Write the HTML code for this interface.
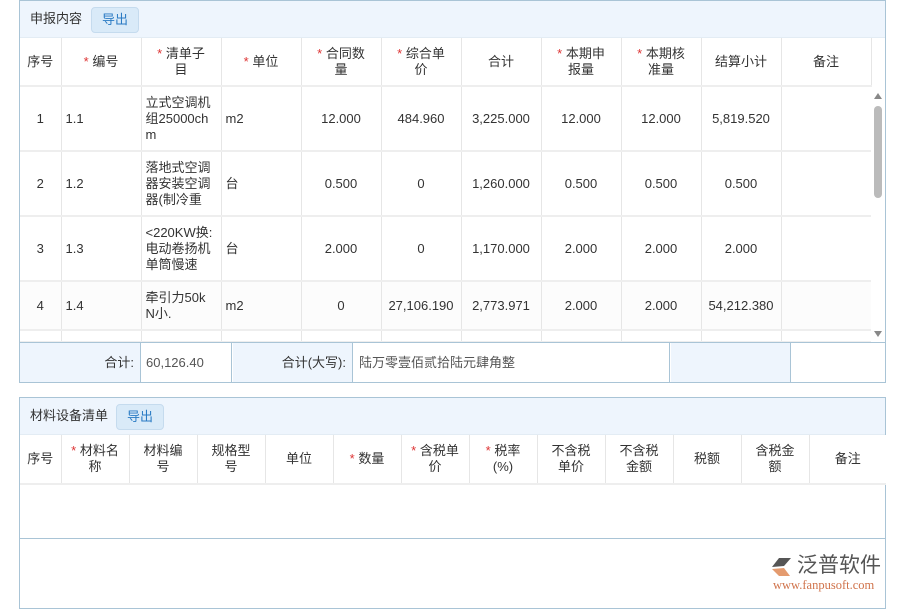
<!DOCTYPE html><html><head><meta charset="utf-8"><style>
body{margin:0;width:900px;height:600px;background:#fff;font-family:"Liberation Sans","Noto Sans CJK SC",sans-serif;font-size:13px;color:#333;position:relative;overflow:hidden}
.p{position:absolute;left:19px;width:865px;border:1px solid #a9c4d6;background:#fff}
.hd{height:36px;background:#eef5fd;border-bottom:1px solid #e3ecf4;position:relative}
.hd span{position:absolute;top:9px;left:10px;line-height:18px}
.btn{position:absolute;top:6px;height:24px;width:46px;background:#d9eaf8;border:1px solid #c5dbee;border-radius:4px;color:#2a7bc4;text-align:center;line-height:24px}
table{border-collapse:collapse;table-layout:fixed;position:absolute;left:0;background:#fff}
td{border-right:1px solid #e6e6e6;border-bottom:2px solid #eee;text-align:center;padding:0 4px;line-height:16px;overflow:hidden}
.l{text-align:left}
i{color:#d33;font-style:normal}
.f{position:absolute;top:342px;height:39px;line-height:39px;border-right:1px solid #a9c4d6}
</style></head><body>
<div class="p" style="top:0;height:381px">
<div class="hd"><span>申报内容</span><div class="btn" style="left:71px">导出</div></div>
<table style="top:37px;width:851px">
<colgroup><col style="width:41px"><col style="width:80px"><col style="width:80px"><col style="width:80px"><col style="width:80px"><col style="width:80px"><col style="width:80px"><col style="width:80px"><col style="width:80px"><col style="width:80px"><col style="width:90px"></colgroup>
<tr style="height:48px"><td>序号</td><td><i>*</i> 编号</td><td><i>*</i> 清单子<br>目</td><td><i>*</i> 单位</td><td><i>*</i> 合同数<br>量</td><td><i>*</i> 综合单<br>价</td><td>合计</td><td><i>*</i> 本期申<br>报量</td><td><i>*</i> 本期核<br>准量</td><td>结算小计</td><td>备注</td></tr>
<tr style="height:65px"><td>1</td><td class="l">1.1</td><td class="l">立式空调机<br>组25000ch<br>m</td><td class="l">m2</td><td>12.000</td><td>484.960</td><td>3,225.000</td><td>12.000</td><td>12.000</td><td>5,819.520</td><td></td></tr>
<tr style="height:65px"><td>2</td><td class="l">1.2</td><td class="l">落地式空调<br>器安装空调<br>器(制冷重</td><td class="l">台</td><td>0.500</td><td>0</td><td>1,260.000</td><td>0.500</td><td>0.500</td><td>0.500</td><td></td></tr>
<tr style="height:65px"><td>3</td><td class="l">1.3</td><td class="l">&lt;220KW换:<br>电动卷扬机<br>单筒慢速</td><td class="l">台</td><td>2.000</td><td>0</td><td>1,170.000</td><td>2.000</td><td>2.000</td><td>2.000</td><td></td></tr>
<tr style="height:49px;background:#fcfcfc"><td>4</td><td class="l">1.4</td><td class="l">牵引力50k<br>N小.</td><td class="l">m2</td><td>0</td><td>27,106.190</td><td>2,773.971</td><td>2.000</td><td>2.000</td><td>54,212.380</td><td></td></tr>
<tr style="height:12px"><td></td><td></td><td></td><td></td><td></td><td></td><td></td><td></td><td></td><td></td><td></td></tr>
</table>
<div style="position:absolute;left:851px;top:86px;width:14px;height:256px;background:#fff"></div>
<div style="position:absolute;left:854px;top:92px;border:4px solid transparent;border-bottom:6px solid #888;border-top:0"></div>
<div style="position:absolute;left:854px;top:105px;width:8px;height:92px;background:#bbb;border-radius:4px"></div>
<div style="position:absolute;left:854px;top:330px;border:4px solid transparent;border-top:6px solid #888;border-bottom:0"></div>
<div style="position:absolute;left:0;top:341px;width:865px;border-top:1px solid #a9c4d6"></div>
<div class="f" style="left:0;width:120px;background:#eef5fd;text-align:right;padding-right:0"><span style="padding-right:6px">合计:</span></div>
<div class="f" style="left:121px;width:91px;padding-left:5px;box-sizing:border-box;color:#555">60,126.40</div>
<div class="f" style="left:213px;width:119px;background:#eef5fd;text-align:right"><span style="padding-right:6px">合计(大写):</span></div>
<div class="f" style="left:333px;width:317px;padding-left:6px;box-sizing:border-box;color:#555">陆万零壹佰贰拾陆元肆角整</div>
<div class="f" style="left:651px;width:119px;background:#eef5fd"></div>
</div>
<div class="p" style="top:397px;height:210px">
<div class="hd"><span>材料设备清单</span><div class="btn" style="left:96px">导出</div></div>
<table style="top:37px;width:865px">
<colgroup><col style="width:41px"><col style="width:68px"><col style="width:68px"><col style="width:68px"><col style="width:68px"><col style="width:68px"><col style="width:68px"><col style="width:68px"><col style="width:68px"><col style="width:68px"><col style="width:68px"><col style="width:68px"><col style="width:77px"></colgroup>
<tr style="height:49px"><td>序号</td><td><i>*</i> 材料名<br>称</td><td>材料编<br>号</td><td>规格型<br>号</td><td>单位</td><td><i>*</i> 数量</td><td><i>*</i> 含税单<br>价</td><td><i>*</i> 税率<br>(%)</td><td>不含税<br>单价</td><td>不含税<br>金额</td><td>税额</td><td>含税金<br>额</td><td style="border-right:0">备注</td></tr>
</table>
<div style="position:absolute;left:0;top:140px;width:865px;border-top:1px solid #a9c4d6"></div>
</div>
<div style="position:absolute;left:771px;top:556px;width:24px;height:22px">
<svg width="24" height="22"><path d="M1 11 L8 2 L20 2 L13 10 Z" fill="#555"/><path d="M1 13 L13 12 L19 20 L8 20 Z" fill="#e49b6f"/></svg></div>
<div style="position:absolute;left:797px;top:554px;font-size:21px;line-height:24px;color:#555">泛普软件</div>
<div style="position:absolute;left:773px;top:578px;font-family:'Liberation Serif',serif;font-size:12.5px;line-height:14px;color:#d0734b">www.fanpusoft.com</div>
</body></html>
